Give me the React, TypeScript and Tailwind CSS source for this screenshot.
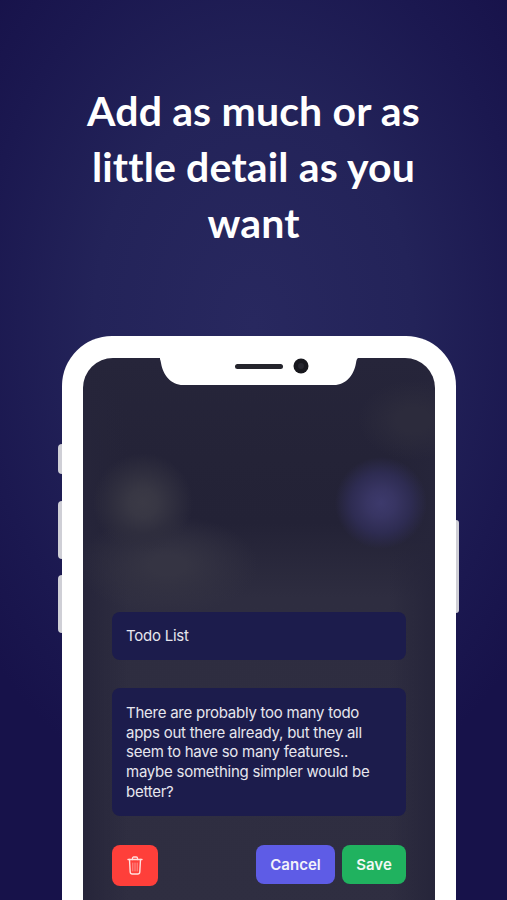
const note =
  'There are probably too many todo apps out there already, but they all seem to have so many features.. maybe something simpler would be better?';

function Notch() {
  return (
    <svg viewBox="0 0 199 27" className="mx-auto block h-[27px] w-[199px] shrink-0">
      <path d="M0 0H199C197.800 1 197.500 2 197 5C195 17 187 27 175 27H24C12 27 4 17 2 5C1.500 2 1.200 1 0 0Z" fill="#ffffff" transform="translate(-1 0)" />
      <rect x="75" y="6" width="48" height="5" rx="2.500" fill="#24242c" />
      <circle cx="141" cy="8" r="7.500" fill="#17171d" />
      <circle cx="141" cy="8" r="3" fill="#26262e" />
    </svg>
  );
}

function TrashIcon() {
  return (
    <svg viewBox="0 0 16 19" className="h-[19px] w-[16px]" fill="none" stroke="#ffe1de" strokeLinecap="round" strokeLinejoin="round">
      <path d="M1 3.500H15" strokeWidth="1.400" />
      <path d="M5.500 3.500V2.200C5.500 1.500 6 1 6.700 1H9.300C10 1 10.500 1.500 10.500 2.200V3.500" strokeWidth="1.300" />
      <path d="M2.500 3.500L3.200 16C3.300 17.200 4 18 5.200 18H10.800C12 18 12.700 17.200 12.800 16L13.500 3.500" strokeWidth="1.400" />
      <path d="M5.800 7V15M8 7V15M10.200 7V15" strokeWidth="0.800" strokeOpacity="0.650" />
    </svg>
  );
}

export default function App() {
  return (
    <div className="relative flex h-[900px] w-full flex-col items-center overflow-hidden bg-[radial-gradient(ellipse_70%_55%_at_50%_36%,#28285f_0%,#232359_45%,#1b1850_78%,#17124a_100%)]">
      <h1 className="mt-[83px] w-[400px] text-center font-['Lato',sans-serif] text-[41px] font-bold leading-[56px] tracking-[0.150px] text-white">
        Add as much or as little detail as you want
      </h1>

      {/* phone */}
      <div className="relative mt-[85px] ml-[11px] w-[394px] shrink-0">
        <div className="absolute -left-[4px] top-[108px] flex w-[4px] flex-col">
          <span className="h-[30px] rounded-l-sm bg-[#cfcfd6]" />
          <span className="mt-[27px] h-[58px] rounded-l-sm bg-[#cfcfd6]" />
          <span className="mt-[16px] h-[58px] rounded-l-sm bg-[#cfcfd6]" />
        </div>
        <span className="absolute -right-[3px] top-[184px] h-[93px] w-[3px] rounded-r-sm bg-[#cfcfd6]" />

        <div className="h-[600px] rounded-t-[50px] bg-white px-[21px] pt-[22px]">
          <div className="flex h-[578px] flex-col overflow-hidden rounded-t-[30px] bg-[radial-gradient(circle_at_60px_145px,#3b3a46_0px,#383744_14px,#2f2e3e_30px,#26253a00_50px),radial-gradient(circle_at_298px_145px,#3d3a6c_0px,#383563_14px,#2e2c52_30px,#26253a00_46px),radial-gradient(ellipse_55px_40px_at_330px_62px,#2c2b3c_30%,#2c2b3c00_100%),radial-gradient(ellipse_90px_50px_at_85px_207px,#353443_20%,#35344300_100%),linear-gradient(to_right,#26253a_0px,#26253a00_45px,#26253a00_306px,#26253a_351px),linear-gradient(to_bottom,#26253a_0px,#242337_100px,#232236_165px,#2e2d40_240px,#2f2e41_100%)]">
            <Notch />

            <div className="flex flex-col px-[29px] pt-[227px] font-['Inter',sans-serif] text-[15px] leading-[19.700px] tracking-[-0.250px] text-[#e6e6ee]">
              <div className="flex h-[48px] items-center rounded-lg bg-[#1c1c4c] px-[14px]">Todo List</div>
              <div className="mt-[28px] h-[128px] rounded-lg bg-[#1c1c4c] px-[14px] py-[15px]">{note}</div>

              <div className="mt-[29px] flex items-start tracking-normal">
                <button className="flex h-[41px] w-[46px] items-center justify-center rounded-lg bg-[#fe3f3a]">
                  <TrashIcon />
                </button>
                <button className="ml-auto h-[39px] w-[79px] rounded-lg bg-[#5e5ce6] font-semibold text-[#f2f2fa]">Cancel</button>
                <button className="ml-[7px] h-[39px] w-[64px] rounded-lg bg-[#20b25f] font-semibold text-[#f2f8f4]">Save</button>
              </div>
            </div>
          </div>
        </div>
      </div>
    </div>
  );
}
